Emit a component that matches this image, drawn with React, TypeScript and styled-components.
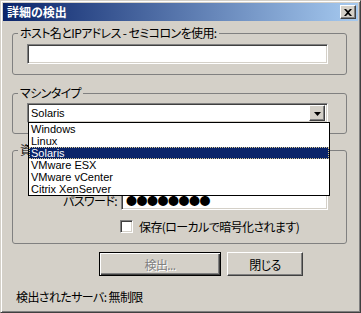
import styled, { createGlobalStyle } from "styled-components";

const GlobalStyle = createGlobalStyle`
  html, body {
    margin: 0;
    padding: 0;
    background: #d4d0c8;
  }
  body {
    font-family: "Noto Sans CJK JP", sans-serif;
    font-size: 12px;
    font-feature-settings: "palt";
    letter-spacing: -0.6px;
    color: #000;
  }
`;

const BG = "#d4d0c8";
const LATIN = `"Liberation Sans", "Noto Sans CJK JP", sans-serif`;

const sunken = `
  border: 1px solid;
  border-color: #808080 #fff #fff #808080;
  box-shadow: inset 1px 1px 0 #404040, inset -1px -1px 0 ${BG};
  background: #fff;
  box-sizing: border-box;
`;

const raised = `
  border: 1px solid;
  border-color: #fff #404040 #404040 #fff;
  box-shadow: inset -1px -1px 0 #808080;
  background: ${BG};
  box-sizing: border-box;
`;

const machineTypes = [
  "Windows",
  "Linux",
  "Solaris",
  "VMware ESX",
  "VMware vCenter",
  "Citrix XenServer",
];

export default function App() {
  return (
    <>
      <GlobalStyle />
      <Window>
        <TitleBar>
          <Title>詳細の検出</Title>
          <CloseButton>
            <svg width="8" height="7" viewBox="0 0 8 7">
              <path
                d="M0 0h2l2 2 2-2h2L5 3.5 8 7H6L4 5 2 7H0l3-3.5z"
                fill="#000"
              />
            </svg>
          </CloseButton>
        </TitleBar>

        <Body>
          <Group>
            <Legend>ホスト名とIPアドレス - セミコロンを使用:</Legend>
            <GroupInner $top={5}>
              <TextBox />
            </GroupInner>
          </Group>

          <Group $gap={12}>
            <Legend>マシンタイプ</Legend>
            <GroupInner $top={4}>
              <Select>
                <SelectValue>Solaris</SelectValue>
                <DropButton>
                  <svg width="7" height="4" viewBox="0 0 7 4">
                    <path d="M0 0h7L3.5 4z" fill="#000" />
                  </svg>
                </DropButton>
                <DropList>
                  {machineTypes.map((m) => (
                    <DropItem key={m} $selected={m === "Solaris"}>
                      {m}
                    </DropItem>
                  ))}
                </DropList>
              </Select>
            </GroupInner>
          </Group>

          <Group $gap={10}>
            <Legend>資格情報</Legend>
            <GroupInner $top={6}>
              <FieldRow>
                <FieldLabel>ユーザー名:</FieldLabel>
                <TextBox />
              </FieldRow>
              <FieldRow>
                <FieldLabel>パスワード:</FieldLabel>
                <TextBox>
                  <Dots>●●●●●●●●</Dots>
                </TextBox>
              </FieldRow>
              <CheckRow>
                <CheckBox />
                <span>保存(ローカルで暗号化されます)</span>
              </CheckRow>
            </GroupInner>
          </Group>

          <ButtonRow>
            <Button $default $disabled $width={122}>
              検出...
            </Button>
            <Button $width={76}>閉じる</Button>
          </ButtonRow>

          <Status>検出されたサーバ: 無制限</Status>
        </Body>
      </Window>
    </>
  );
}

const Window = styled.div`
  width: 361px;
  height: 313px;
  box-sizing: border-box;
  background: ${BG};
  border: 1px solid;
  border-color: ${BG} #404040 #404040 ${BG};
  box-shadow: inset 1px 1px 0 #fff, inset -1px -1px 0 #808080;
  padding: 2px;
  display: flex;
  flex-direction: column;
`;

const TitleBar = styled.div`
  height: 18px;
  flex: none;
  display: flex;
  align-items: center;
  justify-content: space-between;
  padding: 0 2px 0 4px;
  background: linear-gradient(to right, #0a246a, #a6caf0);
`;

const Title = styled.span`
  color: #fff;
  font-weight: bold;
  font-size: 12px;
  line-height: 14px;
  letter-spacing: 0;
`;

const CloseButton = styled.div`
  ${raised}
  width: 16px;
  height: 14px;
  display: flex;
  align-items: center;
  justify-content: center;
`;

const Body = styled.div`
  display: flex;
  flex-direction: column;
  padding: 6px 11px 0 9px;
`;

const Group = styled.fieldset<{ $gap?: number }>`
  margin: ${(p) => p.$gap ?? 0}px 0 0 0;
  padding: 0;
  border: 1px solid #808080;
  border-radius: 3px;
  min-width: 0;
`;

const Legend = styled.legend`
  margin-left: 5px;
  padding: 0 2px;
  height: 12px;
  line-height: 12px;
  font-size: 12px;
`;

const GroupInner = styled.div<{ $top: number }>`
  display: flex;
  flex-direction: column;
  padding: ${(p) => p.$top}px 18px 10px 14px;
`;

const TextBox = styled.div`
  ${sunken}
  height: 20px;
  flex: 1 1 auto;
  display: flex;
  align-items: center;
  padding: 0 4px;
`;

const Select = styled.div`
  ${sunken}
  position: relative;
  height: 20px;
  display: flex;
  align-items: center;
  padding: 2px 2px 2px 3px;
  font-family: ${LATIN};
`;

const SelectValue = styled.span`
  flex: 1;
  font-size: 11px;
  line-height: 14px;
  letter-spacing: 0;
`;

const DropButton = styled.div`
  ${raised}
  width: 16px;
  height: 16px;
  display: flex;
  align-items: center;
  justify-content: center;
  padding-top: 1px;
`;

const DropList = styled.ul`
  position: absolute;
  top: 100%;
  left: 0;
  width: 302px;
  margin: 0;
  padding: 0;
  list-style: none;
  background: #fff;
  border: 1px solid #000;
  box-sizing: border-box;
  z-index: 2;
`;

const DropItem = styled.li<{ $selected?: boolean }>`
  height: 12px;
  line-height: 12px;
  font-size: 11px;
  letter-spacing: 0;
  padding-left: 2px;
  box-sizing: border-box;
  background: ${(p) => (p.$selected ? "#0a246a" : "transparent")};
  color: ${(p) => (p.$selected ? "#fff" : "#000")};
  outline: ${(p) => (p.$selected ? "1px dotted #d8c890" : "none")};
  outline-offset: -1px;
`;

const FieldRow = styled.div`
  display: flex;
  align-items: center;
  gap: 4px;
  & + & {
    margin-top: 8px;
  }
`;

const FieldLabel = styled.span`
  width: 90px;
  text-align: right;
  white-space: nowrap;
`;

const Dots = styled.span`
  font-size: 11px;
  line-height: 12px;
  letter-spacing: -0.5px;
`;

const CheckRow = styled.div`
  display: flex;
  align-items: center;
  gap: 6px;
  margin: 10px 0 0 93px;
  height: 13px;
  line-height: 13px;
`;

const CheckBox = styled.span`
  ${sunken}
  width: 13px;
  height: 13px;
`;

const ButtonRow = styled.div`
  display: flex;
  gap: 6px;
  margin-top: 8px;
  padding-left: 87px;
`;

const Button = styled.div<{
  $default?: boolean;
  $disabled?: boolean;
  $width: number;
}>`
  width: ${(p) => p.$width}px;
  height: 24px;
  box-sizing: border-box;
  display: flex;
  align-items: center;
  justify-content: center;
  background: ${BG};
  border: 1px solid;
  border-color: ${(p) => (p.$default ? "#000" : "#fff #404040 #404040 #fff")};
  box-shadow: ${(p) =>
    p.$default
      ? "inset 1px 1px 0 #fff, inset -1px -1px 0 #404040, inset -2px -2px 0 #808080"
      : "inset -1px -1px 0 #808080"};
  color: ${(p) => (p.$disabled ? "#808080" : "#000")};
  text-shadow: ${(p) => (p.$disabled ? "1px 1px 0 #fff" : "none")};
`;

const Status = styled.div`
  margin: 15px 0 0 4px;
  height: 12px;
  line-height: 12px;
`;
